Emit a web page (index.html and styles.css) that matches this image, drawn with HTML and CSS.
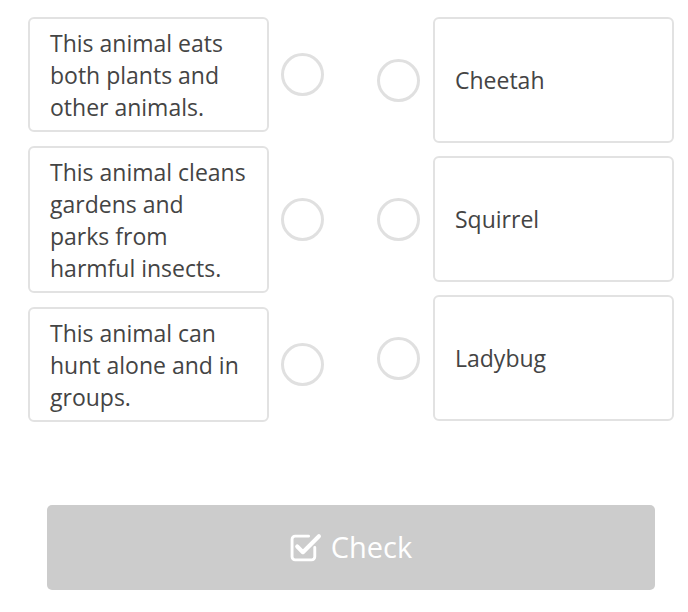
FILE: index.html
```html
<!DOCTYPE html>
<html>
<head>
<meta charset="utf-8">
<link rel="stylesheet" href="styles.css">
</head>
<body>
<div class="task">
  <div class="matching">
    <div class="col col-left">
      <div class="row">
        <div class="card card-left">This animal eats both plants and other animals.</div>
        <span class="dot"></span>
      </div>
      <div class="row">
        <div class="card card-left">This animal cleans gardens and parks from harmful insects.</div>
        <span class="dot"></span>
      </div>
      <div class="row">
        <div class="card card-left">This animal can hunt alone and in groups.</div>
        <span class="dot"></span>
      </div>
    </div>
    <div class="col col-right">
      <div class="row">
        <span class="dot"></span>
        <div class="card card-right">Cheetah</div>
      </div>
      <div class="row">
        <span class="dot"></span>
        <div class="card card-right">Squirrel</div>
      </div>
      <div class="row">
        <span class="dot"></span>
        <div class="card card-right">Ladybug</div>
      </div>
    </div>
  </div>
  <button class="check" type="button">
    <svg class="check-icon" width="32" height="31" viewBox="0 0 31 30" aria-hidden="true">
      <path d="M24 16 V25 a3 3 0 0 1 -3 3 H5 a3 3 0 0 1 -3 -3 V8 a3 3 0 0 1 3 -3 H18" fill="none" stroke="#fff" stroke-width="2.8" stroke-linecap="round" stroke-linejoin="round"/>
      <path d="M7 15 L12.5 20.5 L28 5" fill="none" stroke="#fff" stroke-width="4" stroke-linecap="round" stroke-linejoin="round"/>
    </svg>
    <span>Check</span>
  </button>
</div>
</body>
</html>
```

FILE: styles.css
```css
* { box-sizing: border-box; }
html, body {
  margin: 0;
  padding: 0;
  background: #fff;
}
body {
  font-family: "Open Sans", "Noto Sans", sans-serif;
  color: #444;
}
.task {
  padding: 17px 14px 0 28px;
  width: 688px;
}
.matching {
  display: flex;
  justify-content: space-between;
}
.col {
  display: flex;
  flex-direction: column;
}
.col-left { gap: 14px; }
.col-right { gap: 13px; }
.row {
  display: flex;
  align-items: center;
}
.card {
  border: 2px solid #e2e2e2;
  border-radius: 6px;
  background: #fff;
  font-size: 23px;
  line-height: 32px;
}
.card-left {
  width: 241px;
  padding: 8px 20px 7px 20px;
}
.card-right {
  width: 241px;
  height: 126px;
  padding: 0 20px;
  display: flex;
  align-items: center;
}
.dot {
  width: 43px;
  height: 43px;
  border: 3px solid #e0e0e0;
  border-radius: 50%;
  flex: none;
}
.col-left .dot { margin-left: 12px; }
.col-right .dot { margin-right: 13px; }
.check {
  display: flex;
  align-items: center;
  justify-content: center;
  gap: 9px;
  margin: 83px 0 0 19px;
  width: 608px;
  height: 85px;
  border: none;
  border-radius: 5px;
  background: #cccccc;
  color: #fff;
  font-family: "Open Sans", "Noto Sans", sans-serif;
  font-size: 29px;
  padding: 0 0 2px 0;
}
.check-icon { flex: none; margin-top: 0; }
```
